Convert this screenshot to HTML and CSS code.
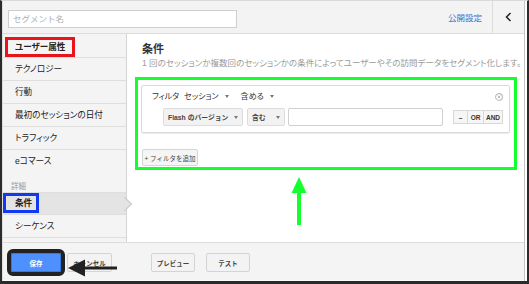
FILE: index.html
```html
<!DOCTYPE html>
<html lang="ja">
<head>
  <meta charset="UTF-8">
  <meta name="viewport" content="width=device-width, initial-scale=1.0">
  <title>セグメント</title>
  <link rel="stylesheet" href="styles.css">
</head>
<body>
  <div class="frame">
    <div class="panel">

      <!-- Top bar -->
      <header class="topbar">
        <input class="name-input" type="text" placeholder="セグメント名">
        <a class="share-link" href="#">公開設定</a>
        <button class="collapse">
          <svg width="7" height="10" viewBox="0 0 7 10"><polyline points="5.5,1 1.5,5 5.5,9" fill="none" stroke="#222" stroke-width="1.5"/></svg>
        </button>
      </header>

      <div class="body">
        <!-- Side navigation -->
        <nav class="sidebar">
          <div class="nav-item nav-first"><span class="mark mark-red">ユーザー属性</span></div>
          <div class="nav-item">テクノロジー</div>
          <div class="nav-item">行動</div>
          <div class="nav-item">最初のセッションの日付</div>
          <div class="nav-item">トラフィック</div>
          <div class="nav-item nav-open">eコマース</div>
          <div class="nav-label">詳細</div>
          <div class="nav-item nav-current"><span class="mark mark-blue">条件</span></div>
          <div class="nav-item">シーケンス</div>
        </nav>

        <!-- Conditions -->
        <main class="main">
          <h2 class="main-title">条件</h2>
          <p class="main-desc">1 回のセッションか複数回のセッションかの条件によってユーザーやその訪問データをセグメント化します。</p>

          <div class="green-box">
            <div class="filter-panel">
              <div class="filter-head">
                <span>フィルタ</span>
                <span class="drop">セッション <i class="caret"></i></span>
                <span class="drop drop-wide">含める <i class="caret"></i></span>
                <svg class="close" width="8" height="8" viewBox="0 0 8 8">
                  <circle cx="4" cy="4" r="3.4" fill="none" stroke="#bcbcbc" stroke-width="1.1"/>
                  <path d="M2.6 2.6 L5.4 5.4 M5.4 2.6 L2.6 5.4" stroke="#bcbcbc" stroke-width="1"/>
                </svg>
              </div>
              <div class="filter-row">
                <button class="ctl ctl-dim">Flash のバージョン <i class="caret"></i></button>
                <button class="ctl ctl-op">含む <i class="caret"></i></button>
                <input class="ctl-input" type="text">
                <div class="logic">
                  <button class="logic-minus">–</button>
                  <button class="logic-or">OR</button>
                  <button class="logic-and">AND</button>
                </div>
              </div>
            </div>
            <button class="add-filter">+ フィルタを追加</button>
          </div>
        </main>
      </div>

      <!-- Footer buttons -->
      <footer class="footer">
        <button class="btn btn-save">保存</button>
        <button class="btn btn-cancel">キャンセル</button>
        <button class="btn btn-preview">プレビュー</button>
        <button class="btn btn-test">テスト</button>
      </footer>
    </div>
  </div>

  <!-- Annotation arrows -->
  <svg class="arrows" width="529" height="284" viewBox="0 0 529 284">
    <line x1="127" y1="48.5" x2="94" y2="48.5" stroke="#e8141c" stroke-width="2.5"/>
    <polygon points="82,48.5 98,41 98,56" fill="#e8141c"/>
    <line x1="97" y1="204" x2="62" y2="204" stroke="#1238f0" stroke-width="2.5"/>
    <polygon points="48,204 65,197.5 65,210.5" fill="#1238f0"/>
    <line x1="299" y1="225" x2="299" y2="190" stroke="#14ff2e" stroke-width="4"/>
    <polygon points="299,177 291.5,193 306.5,193" fill="#14ff2e"/>
    <line x1="117" y1="268" x2="82" y2="268" stroke="#222" stroke-width="3"/>
    <polygon points="68,268 85,259.5 85,276.5" fill="#222"/>
  </svg>
</body>
</html>
```

FILE: styles.css
```css
* {
  box-sizing: border-box;
}

body {
  margin: 0;
  width: 529px;
  height: 284px;
  overflow: hidden;
  position: relative;
  font-family: "Liberation Sans", "Noto Sans CJK JP", sans-serif;
  font-feature-settings: "palt";
  color: #333;
  background: #fff;
}

.frame {
  width: 529px;
  height: 284px;
  border-style: solid;
  border-color: #d9d9d9 #2b2b2b #2b2b2b #2b2b2b;
  border-width: 1px 2px 3px 2px;
  padding-right: 2px;
  background: #fff;
}

.panel {
  height: 100%;
  display: flex;
  flex-direction: column;
  border-left: 1px solid #dedede;
  border-right: 1px solid #c4c4c4;
}

/* Top bar */
.topbar {
  height: 33px;
  flex: none;
  display: flex;
  background: #f3f3f3;
  border-bottom: 1px solid #dcdcdc;
}

.name-input {
  margin: 9px 0 0 5px;
  width: 229px;
  height: 18px;
  padding: 0 4px;
  border: 1px solid #cfcfcf;
  font-family: inherit;
  font-size: 8.5px;
  outline: none;
}

.name-input::placeholder {
  color: #b0b0b0;
}

.share-link {
  margin-left: auto;
  margin-right: 10px;
  align-self: center;
  font-size: 8.5px;
  color: #3a6fd0;
  text-decoration: none;
}

.collapse {
  width: 32px;
  padding: 0;
  border: none;
  border-left: 1px solid #dcdcdc;
  background: transparent;
  display: flex;
  align-items: center;
  justify-content: center;
}

/* Body */
.body {
  flex: 1;
  display: flex;
  min-height: 0;
}

.sidebar {
  width: 124px;
  flex: none;
  position: relative;
  z-index: 1;
  background: #f4f4f4;
  border-right: 1px solid #d4d4d4;
}

.nav-item {
  height: 23px;
  padding-left: 12px;
  border-bottom: 1px solid #dedede;
  font-size: 8.6px;
  line-height: 22px;
  color: #222;
}

.nav-first {
  height: 24px;
  padding: 3px 0 0 2px;
  line-height: 14px;
}

.nav-open {
  border-bottom: none;
  height: 22px;
}

.nav-label {
  height: 21px;
  padding: 10px 0 0 8px;
  border-bottom: 1px solid #dedede;
  font-size: 7.5px;
  line-height: 10px;
  color: #999;
}

.nav-current {
  height: 22px;
  padding: 0;
  position: relative;
  background: #e4e4e4;
  line-height: 14px;
}

.nav-current::after {
  content: "";
  position: absolute;
  right: -4px;
  top: 6px;
  width: 9px;
  height: 9px;
  background: #e4e4e4;
  border-top: 1px solid #c8c8c8;
  border-right: 1px solid #c8c8c8;
  transform: rotate(45deg);
}

.mark {
  display: inline-block;
  border: 3px solid;
  line-height: 14px;
}

.mark-red {
  border-color: #e8141c;
  padding: 0 7px;
  font-weight: bold;
}

.mark-blue {
  border-color: #1238f0;
  padding: 0 4px 0 9px;
  font-weight: bold;
}

/* Main */
.main {
  flex: 1;
  min-width: 0;
  padding: 8px 7px 0 8px;
}

.main-title {
  margin: 0 0 2px 7px;
  font-size: 11px;
  line-height: 14px;
  font-weight: bold;
  color: #333;
}

.main-desc {
  margin: 0 0 8px 7px;
  font-size: 8.5px;
  line-height: 11px;
  color: #9a9a9a;
  white-space: nowrap;
}

.green-box {
  border: 3px solid #14ff2e;
  padding: 5px 4px 1px 3px;
}

.filter-panel {
  height: 48px;
  padding: 5px 6px 6px 10px;
  border: 1px solid #dadada;
  border-radius: 2px;
  box-shadow: 0 1px 1px rgba(0, 0, 0, 0.08);
}

.filter-head {
  height: 11px;
  display: flex;
  align-items: center;
  font-size: 8px;
  line-height: 11px;
  color: #333;
}

.drop {
  margin-left: 5px;
  display: flex;
  align-items: center;
}

.drop-wide {
  margin-left: 12px;
}

.caret {
  display: inline-block;
  margin-left: 6px;
  border-left: 2.5px solid transparent;
  border-right: 2.5px solid transparent;
  border-top: 3px solid #777;
}

.close {
  margin-left: auto;
}

.filter-row {
  margin-top: 6px;
  height: 18px;
  display: flex;
  align-items: center;
  padding-left: 11px;
}

.ctl {
  height: 18px;
  padding: 0 4px;
  border: 1px solid #dcdcdc;
  border-radius: 2px;
  background: #f2f2f2;
  display: flex;
  align-items: center;
  justify-content: space-between;
  white-space: nowrap;
  font-family: inherit;
  font-size: 6.8px;
  font-weight: bold;
  color: #444;
}

.ctl-dim {
  width: 80px;
  flex: none;
}

.ctl-op {
  width: 38px;
  flex: none;
  margin-left: 4px;
}

.ctl-input {
  flex: 1 1 0;
  width: 0;
  min-width: 0;
  height: 18px;
  margin-left: 3px;
  border: 1px solid #d0d0d0;
  border-radius: 2px;
}

.logic {
  margin-left: 11px;
  height: 14px;
  flex: none;
  display: flex;
}

.logic button {
  height: 14px;
  padding: 0;
  margin-left: -1px;
  border: 1px solid #d8d8d8;
  background: #f6f6f6;
  font-family: inherit;
  font-size: 6.5px;
  font-weight: bold;
  color: #333;
}

.logic-minus {
  width: 15px;
}

.logic-or {
  width: 17px;
}

.logic-and {
  width: 20px;
}

.add-filter {
  display: block;
  width: 56px;
  height: 17px;
  margin: 16px 0 0 1px;
  padding: 0;
  border: 1px solid #d6d6d6;
  border-radius: 2px;
  background: #f5f5f5;
  font-family: inherit;
  font-size: 6.5px;
  color: #444;
}

/* Footer */
.footer {
  height: 39px;
  flex: none;
  display: flex;
  align-items: flex-start;
  padding: 10px 0 0 8px;
  background: #f4f4f4;
  border-top: 1px solid #dcdcdc;
  border-bottom: 1px solid #fafafa;
}

.btn {
  height: 19px;
  width: 44px;
  padding: 0;
  border: 1px solid #d4d4d4;
  border-radius: 2px;
  background: #f3f3f3;
  font-family: inherit;
  font-size: 6.5px;
  font-weight: bold;
  color: #444;
}

.btn-save {
  width: 50px;
  background: #4d90fe;
  border-color: #3079ed;
  color: #fff;
  outline: 4px solid #222;
}

.btn-cancel {
  width: 45px;
  margin-left: 6px;
}

.btn-preview {
  margin-left: 39px;
}

.btn-test {
  margin-left: 11px;
}

/* Annotation overlay */
.arrows {
  position: absolute;
  left: 0;
  top: 0;
  pointer-events: none;
}
```
